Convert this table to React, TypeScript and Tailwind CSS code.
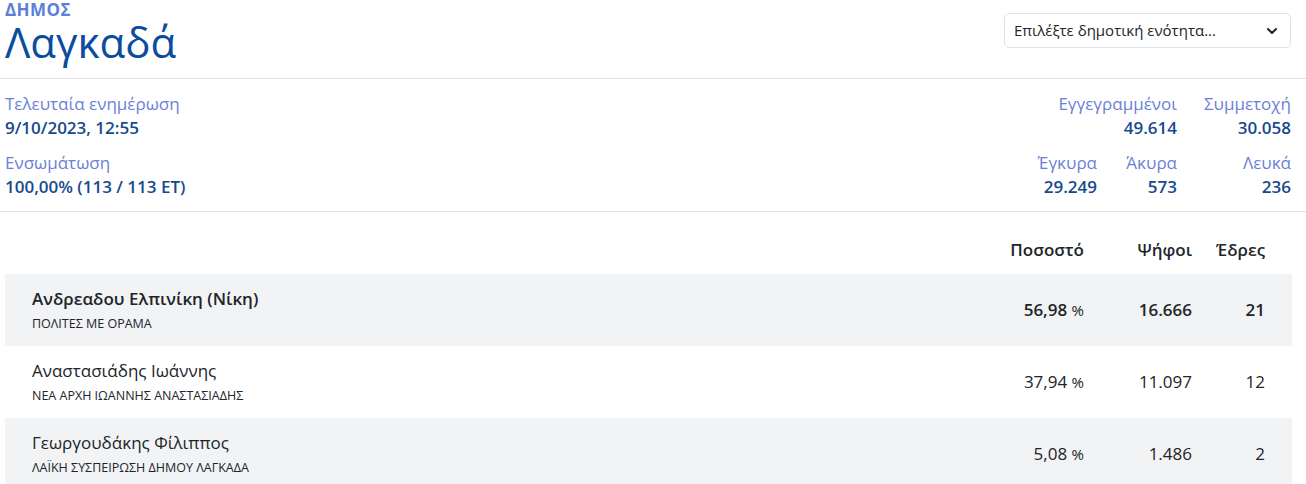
import { ChevronDown } from "lucide-react";

const stats = {
  updated: "9/10/2023, 12:55",
  progress: "100,00% (113 / 113 ΕΤ)",
};

const candidates = [
  { name: "Ανδρεαδου Ελπινίκη (Νίκη)", party: "ΠΟΛΙΤΕΣ ΜΕ ΟΡΑΜΑ", pct: "56,98", votes: "16.666", seats: "21", lead: true },
  { name: "Αναστασιάδης Ιωάννης", party: "ΝΕΑ ΑΡΧΗ ΙΩΑΝΝΗΣ ΑΝΑΣΤΑΣΙΑΔΗΣ", pct: "37,94", votes: "11.097", seats: "12", lead: false },
  { name: "Γεωργουδάκης Φίλιππος", party: "ΛΑΪΚΗ ΣΥΣΠΕΙΡΩΣΗ ΔΗΜΟΥ ΛΑΓΚΑΔΑ", pct: "5,08", votes: "1.486", seats: "2", lead: false },
];

function Stat({ label, value }: { label: string; value: string }) {
  return (
    <div className="flex flex-col items-end whitespace-nowrap">
      <span className="text-[#6c7fd8] leading-6">{label}</span>
      <span className="text-[#174a8b] font-semibold leading-6">{value}</span>
    </div>
  );
}

export default function App() {
  return (
    <div className="min-h-screen bg-white text-[17px] text-[#212529] font-['Open_Sans',sans-serif]">
      <div className="h-[79px] flex justify-between items-start pl-[5px] pr-[15px] border-b border-[#dee2e6]">
        <div>
          <div className="text-[17px] leading-[20px] font-bold tracking-wide text-[#5b80d9]">ΔΗΜΟΣ</div>
          <h1 className="text-[42px] leading-[44px] text-[#0b4d9d]">Λαγκαδά</h1>
        </div>
        <div className="mt-[13px] w-[287px] h-[35px] flex items-center justify-between pl-[9px] pr-[10px] border border-[#dee2e6] rounded-[5px] text-[15px] text-[#212529]">
          <span>Επιλέξτε δημοτική ενότητα...</span>
          <ChevronDown className="w-4 h-4" strokeWidth={3} />
        </div>
      </div>

      <div className="h-[133px] flex justify-between items-start pt-[13px] pl-[5px] pr-[15px] border-b border-[#dee2e6]">
        <div className="flex flex-col gap-[11px]">
          <div className="flex flex-col">
            <span className="text-[#6c7fd8] leading-6">Τελευταία ενημέρωση</span>
            <span className="text-[#174a8b] font-semibold leading-6">{stats.updated}</span>
          </div>
          <div className="flex flex-col">
            <span className="text-[#6c7fd8] leading-6">Ενσωμάτωση</span>
            <span className="text-[#174a8b] font-semibold leading-6">{stats.progress}</span>
          </div>
        </div>
        <div className="grid grid-cols-[80px_80px_114px] content-start gap-y-[11px]">
          <div />
          <Stat label="Εγγεγραμμένοι" value="49.614" />
          <Stat label="Συμμετοχή" value="30.058" />
          <Stat label="Έγκυρα" value="29.249" />
          <Stat label="Άκυρα" value="573" />
          <Stat label="Λευκά" value="236" />
        </div>
      </div>

      <div className="pl-[5px] pr-[14px]">
        <div className="h-[62px] flex items-end pb-[12px] pr-[27px] font-semibold leading-6">
          <div className="flex-1" />
          <div className="w-[120px] text-right">Ποσοστό</div>
          <div className="w-[108px] text-right">Ψήφοι</div>
          <div className="w-[73px] text-right">Έδρες</div>
        </div>
        {candidates.map((c, i) => (
          <div
            key={c.name}
            className={`h-[72px] flex items-center pl-[27px] pr-[27px] ${i % 2 === 0 ? "bg-[#f1f3f5]" : "bg-white"} ${c.lead ? "font-semibold" : ""}`}
          >
            <div className="flex-1 flex flex-col">
              <span className="leading-6">{c.name}</span>
              <span className="mt-[4px] text-[12.5px] leading-[18px] font-normal">{c.party}</span>
            </div>
            <div className="w-[120px] text-right">
              {c.pct} <span className="text-[15px] font-normal">%</span>
            </div>
            <div className="w-[108px] text-right">{c.votes}</div>
            <div className="w-[73px] text-right">{c.seats}</div>
          </div>
        ))}
      </div>
    </div>
  );
}
